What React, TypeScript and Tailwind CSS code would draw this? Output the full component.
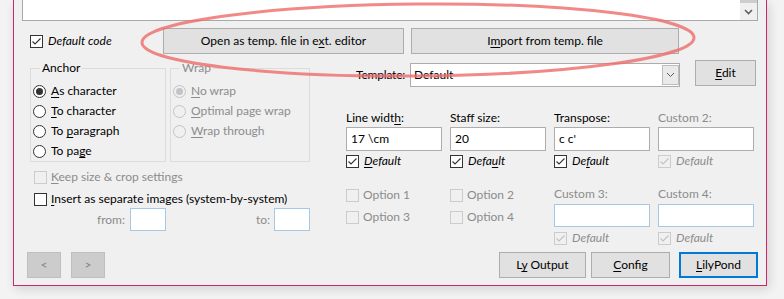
import React from "react";

const Check = ({ checked = false, disabled = false }: { checked?: boolean; disabled?: boolean }) => (
  <span
    className={
      disabled
        ? "w-[13px] h-[13px] shrink-0 border border-[#cccccc] bg-[#f0f0f0] flex items-center justify-center"
        : "w-[13px] h-[13px] shrink-0 border border-[#333333] bg-white flex items-center justify-center"
    }
  >
    {checked && (
      <svg width="11" height="11" viewBox="0 0 11 11">
        <path d="M1.5 5.5 L4 8 L9.5 2.5" fill="none" stroke={disabled ? "#c2c2c2" : "#333333"} strokeWidth="1.1" />
      </svg>
    )}
  </span>
);

const Radio = ({ selected = false, disabled = false }: { selected?: boolean; disabled?: boolean }) => (
  <span
    className={
      disabled
        ? "w-[13px] h-[13px] shrink-0 rounded-full border border-[#c4c4c4] bg-[#f0f0f0] flex items-center justify-center"
        : "w-[13px] h-[13px] shrink-0 rounded-full border border-[#333333] bg-white flex items-center justify-center"
    }
  >
    {selected && (
      <span className={disabled ? "w-[7px] h-[7px] rounded-full bg-[#c4c4c4]" : "w-[7px] h-[7px] rounded-full bg-[#333333]"} />
    )}
  </span>
);

const U = ({ children }: { children: React.ReactNode }) => <u className="underline-offset-[2px]">{children}</u>;

const Btn = ({ className, children }: { className: string; children: React.ReactNode }) => (
  <div className={"h-[26px] bg-[#e1e1e1] border border-[#adadad] flex items-center justify-center " + className}>{children}</div>
);

const DefaultRow = ({ disabled = false, children }: { disabled?: boolean; children: React.ReactNode }) => (
  <div className={disabled ? "h-[14px] flex items-center gap-[5px] text-[#8c8c8c]" : "h-[14px] flex items-center gap-[5px]"}>
    <Check checked disabled={disabled} />
    <span className="italic">{children}</span>
  </div>
);

const Field = ({ label, value, def, disabled = false }: any) => (
  <div className="w-[96px] flex flex-col">
    <div className={disabled ? "h-[14px] text-[#8c8c8c]" : "h-[14px]"}>{label}</div>
    <div className="mt-[2px] h-[24px] border border-[#adadad] bg-white px-[4px] flex items-center">{value}</div>
    <div className="mt-[3px]">
      <DefaultRow disabled={disabled}>{def}</DefaultRow>
    </div>
  </div>
);

const CustomField = ({ label }: { label: string }) => (
  <div className="w-[96px] flex flex-col">
    <div className="h-[14px] text-[#8c8c8c]">{label}</div>
    <div className="mt-[3px] h-[23px] border border-[#a7c7e7] bg-white" />
    <div className="mt-[4px]">
      <DefaultRow disabled>Default</DefaultRow>
    </div>
  </div>
);

const Option = ({ label, className }: { label: string; className: string }) => (
  <div className={"h-[14px] flex items-center gap-[4px] text-[#8c8c8c] " + className}>
    <Check disabled />
    <span>{label}</span>
  </div>
);

export default function App() {
  return (
    <div className="w-[784px] h-[299px] bg-[#f3f3f3] overflow-hidden relative font-['Lato','Noto_Sans',sans-serif] text-[12px] leading-[14px] text-black">
      <div className="ml-[13px] w-[754px] h-[286px] bg-[#f0f0f0] border-x border-b border-[#c8286a] shadow-[2px_3px_10px_rgba(0,0,0,0.14)] flex flex-col px-[8px]">
        {/* text area */}
        <div className="h-[21px] border-x border-b border-[#a9a9a9] bg-white flex justify-end">
          <div className="w-[17px] h-full bg-[#f0f0f0] flex flex-col">
            <div className="h-[3px] bg-[#cdcdcd]" />
            <div className="flex-1 flex items-center justify-center">
              <svg width="9" height="6" viewBox="0 0 9 6">
                <path d="M1 1 L4.5 4.5 L8 1" fill="none" stroke="#606060" strokeWidth="1.6" />
              </svg>
            </div>
          </div>
        </div>

        {/* row 2 */}
        <div className="mt-[7px] h-[26px] flex items-center">
          <div className="w-[141px] pl-[8px] flex items-center gap-[5px]">
            <Check checked />
            <span className="italic">Default code</span>
          </div>
          <Btn className="w-[241px]">
            <span>
              Open as temp. file in e<U>x</U>t. editor
            </span>
          </Btn>
          <Btn className="ml-[7px] w-[268px]">
            <span>
              I<U>m</U>port from temp. file
            </span>
          </Btn>
        </div>

        {/* body */}
        <div className="mt-[6px] flex">
          {/* left column */}
          <div className="w-[288px] pl-[8px] flex flex-col">
            <div className="mt-[8px] flex gap-[4px]">
              <div className="relative w-[136px] h-[94px] border border-[#dcdcdc] pt-[12px] pl-[2px] flex flex-col">
                <span className="absolute left-[9px] top-[-8px] px-[2px] bg-[#f0f0f0] leading-[14px]">Anchor</span>
                <div className="h-[20px] flex items-center gap-[5px]">
                  <Radio selected />
                  <span>
                    <U>A</U>s character
                  </span>
                </div>
                <div className="h-[20px] flex items-center gap-[5px]">
                  <Radio />
                  <span>
                    <U>T</U>o character
                  </span>
                </div>
                <div className="h-[20px] flex items-center gap-[5px]">
                  <Radio />
                  <span>
                    To <U>p</U>aragraph
                  </span>
                </div>
                <div className="h-[20px] flex items-center gap-[5px]">
                  <Radio />
                  <span>
                    To pa<U>g</U>e
                  </span>
                </div>
              </div>
              <div className="relative w-[140px] h-[94px] border border-[#dcdcdc] pt-[12px] pl-[2px] flex flex-col text-[#8c8c8c]">
                <span className="absolute left-[9px] top-[-8px] px-[2px] bg-[#f0f0f0] leading-[14px]">Wrap</span>
                <div className="h-[20px] flex items-center gap-[5px]">
                  <Radio selected disabled />
                  <span>
                    <U>N</U>o wrap
                  </span>
                </div>
                <div className="h-[20px] flex items-center gap-[5px]">
                  <Radio disabled />
                  <span>
                    <U>O</U>ptimal page wrap
                  </span>
                </div>
                <div className="h-[20px] flex items-center gap-[5px]">
                  <Radio disabled />
                  <span>
                    <U>W</U>rap through
                  </span>
                </div>
              </div>
            </div>
            <div className="mt-[5px] h-[20px] pl-[4px] flex items-center gap-[4px] text-[#8c8c8c]">
              <Check disabled />
              <span>
                <U>K</U>eep size &amp; crop settings
              </span>
            </div>
            <div className="mt-[4px] h-[16px] pl-[4px] flex items-center gap-[4px]">
              <Check />
              <span>
                <U>I</U>nsert as separate images (system-by-system)
              </span>
            </div>
            <div className="mt-[1px] h-[23px] flex text-[#8c8c8c]">
              <div className="w-[136px] flex items-center justify-end gap-[5px]">
                <span>from:</span>
                <div className="w-[36px] h-[23px] border border-[#a7c7e7] bg-white" />
              </div>
              <div className="flex-1 flex items-center justify-end gap-[4px]">
                <span>to:</span>
                <div className="w-[36px] h-[23px] border border-[#a7c7e7] bg-white" />
              </div>
            </div>
          </div>

          {/* right column */}
          <div className="ml-[36px] w-[412px] flex flex-col">
            <div className="h-[27px] flex items-start">
              <span className="ml-[10px] mt-[8px] w-[54px] tracking-[-0.2px]">Template:</span>
              <div className="mt-[3px] w-[270px] h-[24px] border border-[#adadad] bg-white flex items-stretch">
                <span className="flex-1 pl-[3px] flex items-center">Default</span>
                <div className="my-[1px] w-[17px] bg-[#eaeaea] border border-[#bdbdbd] flex items-center justify-center">
                  <svg width="9" height="6" viewBox="0 0 9 6">
                    <path d="M1 1 L4.5 4.5 L8 1" fill="none" stroke="#606060" strokeWidth="1" />
                  </svg>
                </div>
              </div>
              <Btn className="ml-[15px] w-[61px]">
                <span>
                  <U>E</U>dit
                </span>
              </Btn>
            </div>

            <div className="mt-[24px] flex gap-[8px]">
              <Field
                label={
                  <span>
                    Line widt<U>h</U>:
                  </span>
                }
                value="17 \cm"
                def={
                  <span>
                    <U>D</U>efault
                  </span>
                }
              />
              <Field
                label="Staff size:"
                value="20"
                def={
                  <span>
                    Defa<U>u</U>lt
                  </span>
                }
              />
              <Field
                label="Transpose:"
                value="c c'"
                def={
                  <span>
                    De<U>f</U>ault
                  </span>
                }
              />
              <Field label="Custom 2:" value="" def="Default" disabled />
            </div>

            <div className="mt-[19px] flex gap-[8px]">
              <div className="w-[96px] flex flex-col">
                <Option label="Option 1" className="mt-[1px]" />
                <Option label="Option 3" className="mt-[8px]" />
              </div>
              <div className="w-[96px] flex flex-col">
                <Option label="Option 2" className="mt-[1px]" />
                <Option label="Option 4" className="mt-[8px]" />
              </div>
              <CustomField label="Custom 3:" />
              <CustomField label="Custom 4:" />
            </div>
          </div>
        </div>

        {/* bottom row */}
        <div className="mt-[7px] h-[26px] flex items-center">
          <div className="ml-[5px] w-[34px] h-[26px] bg-[#cccccc] border border-[#bfbfbf] flex items-center justify-center text-[#7d8590]">
            &lt;
          </div>
          <div className="ml-[10px] w-[34px] h-[26px] bg-[#cccccc] border border-[#bfbfbf] flex items-center justify-center text-[#7d8590]">
            &gt;
          </div>
          <div className="ml-auto flex items-center">
            <Btn className="w-[87px]">
              <span>
                L<U>y</U> Output
              </span>
            </Btn>
            <Btn className="ml-[5px] w-[79px]">
              <span>
                <U>C</U>onfig
              </span>
            </Btn>
            <div className="ml-[9px] w-[79px] h-[26px] bg-[#e1e1e1] border-2 border-[#0078d7] flex items-center justify-center">
              <span>
                <U>L</U>ilyPond
              </span>
            </div>
          </div>
        </div>
      </div>

      <svg className="absolute left-0 top-0 pointer-events-none" width="784" height="299">
        <ellipse
          cx="418"
          cy="40"
          rx="276"
          ry="36"
          transform="rotate(-0.5 418 40)"
          fill="none"
          stroke="#ef6b6b"
          strokeOpacity="0.8"
          strokeWidth="3"
        />
      </svg>
    </div>
  );
}
